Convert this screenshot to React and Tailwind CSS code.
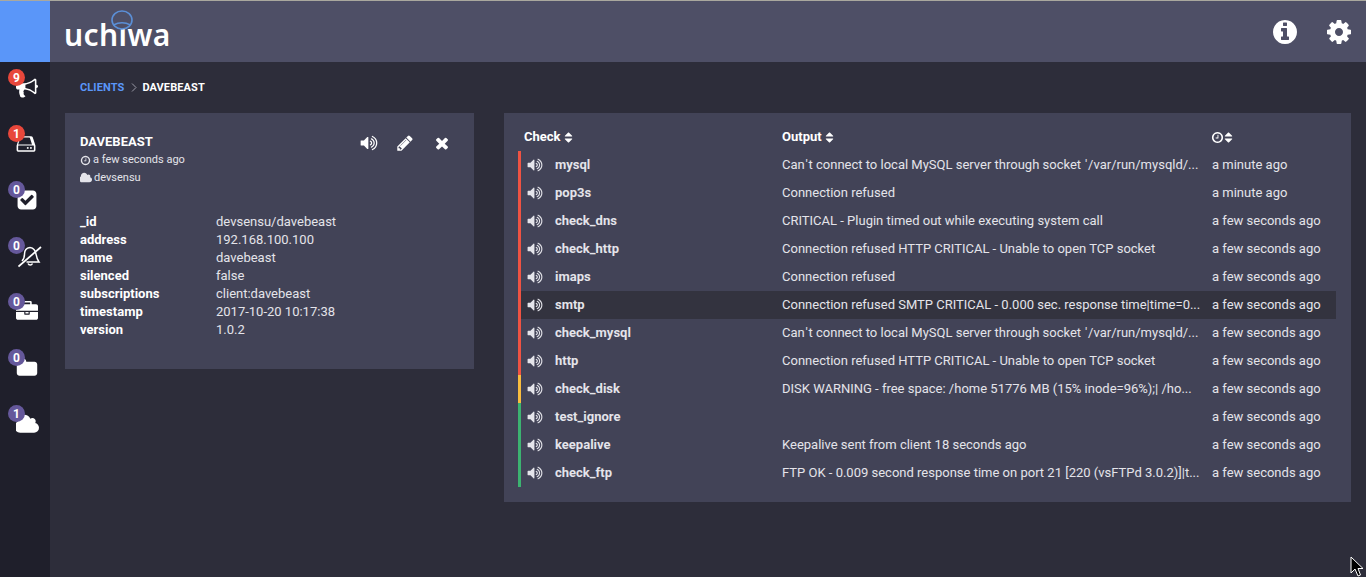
import React from "react";

const P = {
  volume: "M832 352v1088q0 26-19 45t-45 19-45-19l-333-333h-262q-26 0-45-19t-19-45v-384q0-26 19-45t45-19h262l333-333q19-19 45-19t45 19 19 45zm384 544q0 76-42.5 141.5t-112.5 93.5q-10 5-25 5-26 0-45-18.5t-19-45.5q0-21 12-35.5t29-25 34-23 29-36 12-56.5-12-56.5-29-36-34-23-29-25-12-35.5q0-27 19-45.5t45-18.5q15 0 25 5 70 27 112.5 93t42.5 142zm256 0q0 153-85 282.5t-225 188.5q-13 5-25 5-27 0-46-19t-19-45q0-39 39-59 56-29 76-44 74-54 115.5-135.5t41.5-173.5-41.5-173.5-115.5-135.5q-20-15-76-44-39-20-39-59 0-26 19-45t45-19q13 0 26 5 140 59 225 188.5t85 282.5zm256 0q0 230-127 422.5t-338 283.5q-13 5-26 5-26 0-45-19t-19-45q0-36 39-59 7-4 22.5-10.5t22.5-10.5q46-25 82-51 123-91 192-227t69-289-69-289-192-227q-36-26-82-51-7-4-22.5-10.5t-22.5-10.5q-39-23-39-59 0-26 19-45t45-19q13 0 26 5 211 91 338 283.5t127 422.5z",
  pencil: "M491 1536l91-91-235-235-91 91v107h128v128h107zm523-928q0-22-22-22-10 0-17 7l-542 542q-7 7-7 17 0 22 22 22 10 0 17-7l542-542q7-7 7-17zm-54-192l416 416-832 832h-416v-416zm683 96q0 53-37 90l-166 166-416-416 166-165q36-38 90-38 53 0 91 38l235 234q37 39 37 91z",
  times: "M1490 1322q0 40-28 68l-136 136q-28 28-68 28t-68-28l-294-294-294 294q-28 28-68 28t-68-28l-136-136q-28-28-28-68t28-68l294-294-294-294q-28-28-28-68t28-68l136-136q28-28 68-28t68 28l294 294 294-294q28-28 68-28t68 28l136 136q28 28 28 68t-28 68l-294 294 294 294q28 28 28 68z",
  info: "M1152 1376v-160q0-14-9-23t-23-9h-96v-512q0-14-9-23t-23-9h-320q-14 0-23 9t-9 23v160q0 14 9 23t23 9h96v320h-96q-14 0-23 9t-9 23v160q0 14 9 23t23 9h448q14 0 23-9t9-23zm-128-896v-160q0-14-9-23t-23-9h-192q-14 0-23 9t-9 23v160q0 14 9 23t23 9h192q14 0 23-9t9-23zm640 416q0 209-103 385.5t-279.5 279.5-385.5 103-385.5-103-279.5-279.5-103-385.5 103-385.5 279.5-279.5 385.5-103 385.5 103 279.5 279.5 103 385.5z",
  cog: "M1152 896q0-106-75-181t-181-75-181 75-75 181 75 181 181 75 181-75 75-181zm512-109v222q0 12-8 23t-20 13l-185 28q-19 54-39 91 35 50 107 138 10 12 10 25t-9 23q-27 37-99 108t-94 71q-12 0-26-9l-138-108q-44 23-91 38-16 136-29 186-7 28-36 28h-222q-14 0-24.5-8.5t-11.5-21.5l-28-184q-49-16-90-37l-141 107q-10 9-25 9-14 0-25-11-126-114-165-168-7-10-7-23 0-12 8-23 15-21 51-66.5t54-70.5q-27-50-41-99l-183-27q-13-2-21-12.5t-8-23.5v-222q0-12 8-23t19-13l186-28q14-46 39-92-40-57-107-138-10-12-10-24 0-10 9-23 26-36 98.5-107.5t94.5-71.5q13 0 26 10l138 107q44-23 91-38 16-136 29-186 7-28 36-28h222q14 0 24.5 8.5t11.5 21.5l28 184q49 16 90 37l142-107q9-9 24-9 13 0 25 10 129 119 165 170 7 8 7 22 0 12-8 23-15 21-51 66.5t-54 70.5q26 50 41 98l183 28q13 2 21 12.5t8 23.5z",
  bullhorn: "M1664 640q53 0 90.5 37.5t37.5 90.5-37.5 90.5-90.5 37.5v384q0 52-38 90t-90 38q-417-347-812-380-58 19-91 66t-31 100.5 40 92.5q-20 33-23 65.5t6 58 33.5 55 48 50 61.5 50.5q-29 58-111.5 83t-168.5 11.5-132-55.5q-7-23-29.5-87.5t-32-94.5-23-89-15-101 3.5-98.5 22-110.5h-122q-66 0-113-47t-47-113v-192q0-66 47-113t113-47h480q435 0 896-384 52 0 90 38t38 90v384zm-128 604v-954q-394 302-768 343v270q377 42 768 341z",
  check: "M813 1299l614-614q19-19 19-45t-19-45l-102-102q-19-19-45-19t-45 19l-467 467-211-211q-19-19-45-19t-45 19l-102 102q-19 19-19 45t19 45l358 358q19 19 45 19t45-19zm851-883v960q0 119-84.5 203.5t-203.5 84.5h-960q-119 0-203.5-84.5t-84.5-203.5v-960q0-119 84.5-203.5t203.5-84.5h960q119 0 203.5 84.5t84.5 203.5z",
  briefcase: "M640 256h512v-128h-512v128zm1152 640v480q0 66-47 113t-113 47h-1472q-66 0-113-47t-47-113v-480h672v160q0 26 19 45t45 19h320q26 0 45-19t19-45v-160h672zm-768 0v128h-256v-128h256zm768-480v384h-1792v-384q0-66 47-113t113-47h352v-160q0-40 28-68t68-28h576q40 0 68 28t28 68v160h352q66 0 113 47t47 113z",
  folder: "M1728 608v704q0 92-66 158t-158 66h-1216q-92 0-158-66t-66-158v-960q0-92 66-158t158-66h320q92 0 158 66t66 158v32h672q92 0 158 66t66 158z",
  cloud: "M1792 1152q0 159-112.5 271.5t-271.5 112.5h-1088q-185 0-316.5-131.5t-131.5-316.5q0-132 71-241.5t187-163.5q-2-28-2-43 0-212 150-362t362-150q158 0 286.5 88t187.5 230q70-62 166-62 106 0 181 75t75 181q0 75-41 138 129 30 213 134.5t84 239.5z",
  hdd: "M1040 1216q0 33-23.5 56.5t-56.5 23.5-56.5-23.5-23.5-56.5 23.5-56.5 56.5-23.5 56.5 23.5 23.5 56.5zm256 0q0 33-23.5 56.5t-56.5 23.5-56.5-23.5-23.5-56.5 23.5-56.5 56.5-23.5 56.5 23.5 23.5 56.5zm160 160v-320q0-13-9.5-22.5t-22.5-9.5h-1216q-13 0-22.5 9.5t-9.5 22.5v320q0 13 9.5 22.5t22.5 9.5h1216q13 0 22.5-9.5t9.5-22.5zm-1280-448h1128l-170-523q-4-13-15-21t-24-8h-710q-13 0-24 8t-15 21zm1408 128v320q0 66-47 113t-113 47h-1216q-66 0-113-47t-47-113v-320q0-25 16-75l197-606q17-53 63-86t101-33h782q55 0 101 33t63 86l197 606q16 50 16 75z",
  clock: "M1024 544v448q0 14-9 23t-23 9h-320q-14 0-23-9t-9-23v-64q0-14 9-23t23-9h224v-352q0-14 9-23t23-9h64q14 0 23 9t9 23zm416 352q0-148-73-273t-198-198-273-73-273 73-198 198-73 273 73 273 198 198 273 73 273-73 198-198 73-273zm224 0q0 209-103 385.5t-279.5 279.5-385.5 103-385.5-103-279.5-279.5-103-385.5 103-385.5 279.5-279.5 385.5-103 385.5 103 279.5 279.5 103 385.5z",
  sort: "M1408 1088q0 26-19 45l-448 448q-19 19-45 19t-45-19l-448-448q-19-19-19-45t19-45 45-19h896q26 0 45 19t19 45zm0-384q0 26-19 45t-45 19h-896q-26 0-45-19t-19-45 19-45l448-448q19-19 45-19t45 19l448 448q19 19 19 45z",
};

function Fa({ name, size, className = "" }) {
  return (
    <svg width={size} height={size} viewBox="0 0 1792 1792" fill="currentColor" className={`shrink-0 ${className}`}>
      <path d={P[name]} />
    </svg>
  );
}

function BellSlash() {
  return (
    <svg width="24" height="24" viewBox="0 0 24 24" fill="none" stroke="#fff" strokeWidth="1.5" className="ml-[2px]">
      <path d="M0.5 21.5 L23 2" strokeWidth="1.7" />
      <path d="M12 2.5 C8.5 3 6.5 5.5 6.5 9 C6.5 12.5 5.5 14.5 4 16" />
      <path d="M12 2.5 C15.5 3 17.5 6 18 9 C18.5 12 19.5 15 21 17 L8.5 17" />
      <path d="M10 18.5 a2.5 2.5 0 0 0 4.5 0" />
    </svg>
  );
}

const nav = [
  { n: 9, red: true, name: "bullhorn", size: 22 },
  { n: 1, red: true, name: "hdd", size: 22 },
  { n: 0, name: "check", size: 22 },
  { n: 0, bell: true },
  { n: 0, name: "briefcase", size: 22 },
  { n: 0, name: "folder", size: 22 },
  { n: 1, name: "cloud", size: 23 },
];

const meta = [
  ["_id", "devsensu/davebeast"],
  ["address", "192.168.100.100"],
  ["name", "davebeast"],
  ["silenced", "false"],
  ["subscriptions", "client:davebeast"],
  ["timestamp", "2017-10-20 10:17:38"],
  ["version", "1.0.2"],
];

const R = "bg-[#ef5343]", Y = "bg-[#f9bd3f]", G = "bg-[#3cb371]";
const rows = [
  ["mysql", "Can't connect to local MySQL server through socket '/var/run/mysqld/...", "a minute ago", R],
  ["pop3s", "Connection refused", "a minute ago", R],
  ["check_dns", "CRITICAL - Plugin timed out while executing system call", "a few seconds ago", R],
  ["check_http", "Connection refused HTTP CRITICAL - Unable to open TCP socket", "a few seconds ago", R],
  ["imaps", "Connection refused", "a few seconds ago", R],
  ["smtp", "Connection refused SMTP CRITICAL - 0.000 sec. response time|time=0...", "a few seconds ago", R, true],
  ["check_mysql", "Can't connect to local MySQL server through socket '/var/run/mysqld/...", "a few seconds ago", R],
  ["http", "Connection refused HTTP CRITICAL - Unable to open TCP socket", "a few seconds ago", R],
  ["check_disk", "DISK WARNING - free space: /home 51776 MB (15% inode=96%);| /ho...", "a few seconds ago", Y],
  ["test_ignore", "", "a few seconds ago", G],
  ["keepalive", "Keepalive sent from client 18 seconds ago", "a few seconds ago", G],
  ["check_ftp", "FTP OK - 0.009 second response time on port 21 [220 (vsFTPd 3.0.2)]|t...", "a few seconds ago", G],
];

function Output({ text }) {
  const parts = text.split("'");
  return parts.map((p, i) => (
    <React.Fragment key={i}>
      {i > 0 && <span className="mx-[0.75px]">'</span>}
      {p}
    </React.Fragment>
  ));
}

export default function App() {
  return (
    <div className="w-[1366px] h-[577px] overflow-hidden relative flex flex-col bg-[#2d2d3a] text-[#e4e4ea] text-[13px] font-['Roboto',sans-serif]">
      <div className="h-px bg-[#a9a89e] shrink-0" />
      <div className="flex flex-1 min-h-0">
        <aside className="w-[50px] shrink-0 bg-[#1f1f2b] flex flex-col">
          <div className="h-[61px] bg-[#5a96f9]" />
          <div className="flex flex-col pt-[5px] text-white">
            {nav.map(({ n, red, name, size, bell }, i) => (
              <div key={i} className="relative h-[56px] pl-[16px]">
                <div className={`absolute left-[8px] top-[2px] z-10 w-[17px] h-[17px] rounded-full flex items-center justify-center text-[12px] font-bold text-white ${red ? "bg-[#e8473b]" : "bg-[#65589b]"}`}>{n}</div>
                <div className="pt-[10px]">
                  {bell ? <BellSlash /> : <Fa name={name} size={size} />}
                </div>
              </div>
            ))}
          </div>
        </aside>
        <div className="flex-1 min-w-0 flex flex-col">
          <header className="h-[61px] shrink-0 bg-[#4e4f66] flex items-center justify-between pl-[15px] pr-[13px] text-white">
            <div className="relative w-[110px] h-[50px]">
              <span className="absolute -left-[1px] top-[8px] text-[30px] leading-[40px] font-['Noto_Sans',sans-serif] font-semibold tracking-[0.4px] text-white">uchiwa</span>
              <svg className="absolute left-[46px] top-[3px]" width="22" height="20" viewBox="0 0 22 20" fill="#4e4f66" stroke="#5b8fd6" strokeWidth="1.6">
                <ellipse cx="11" cy="10" rx="10" ry="9" />
                <path d="M2.5 15 Q11 10.5 19.5 15" fill="none" />
              </svg>
            </div>
            <div className="flex items-center gap-[26px]">
              <Fa name="info" size={28} />
              <Fa name="cog" size={28} />
            </div>
          </header>
          <main className="flex-1 min-h-0 px-[15px]">
            <nav className="h-[51px] pl-[15px] pt-[19px] flex items-start text-[11px] font-bold leading-[13px]">
              <span className="text-[#5a96f9] tracking-[0.1px]">CLIENTS</span>
              <svg width="6" height="9" viewBox="0 0 6 9" fill="none" stroke="#9a9aa6" strokeWidth="1" className="ml-[7px] mr-[5px] mt-[2px]">
                <path d="M1 0.5 L5 4.5 L1 8.5" />
              </svg>
              <span className="text-white tracking-[0.1px]">DAVEBEAST</span>
            </nav>
            <div className="flex items-start gap-[30px]">
              <section className="w-[409px] h-[256px] bg-[#424357] px-[15px] pt-[20px]">
                <div className="flex justify-between">
                  <div>
                    <div className="text-[13px] font-bold text-white leading-[17px]">DAVEBEAST</div>
                    <div className="flex items-center gap-[2px] text-[11px] leading-[18px] mt-[1px]"><Fa name="clock" size={11} />a few seconds ago</div>
                    <div className="flex items-center gap-[2px] text-[11px] leading-[18px]"><Fa name="cloud" size={12} />devsensu</div>
                  </div>
                  <div className="flex items-start pt-[1px] pr-[8px] text-white">
                    <Fa name="volume" size={18} />
                    <Fa name="pencil" size={18} className="ml-[18px]" />
                    <Fa name="times" size={18} className="ml-[19px]" />
                  </div>
                </div>
                <div className="mt-[26px] grid grid-cols-[136px_1fr] leading-[18px]">
                  {meta.map(([k, v]) => (
                    <React.Fragment key={k}>
                      <div className="font-bold text-white">{k}</div>
                      <div>{v}</div>
                    </React.Fragment>
                  ))}
                </div>
              </section>
              <section className="w-[847px] h-[389px] bg-[#424357] pl-[14px] pr-[15px] pt-[13px]">
                <div className="h-[22px] mb-[3px] flex items-center font-bold text-white pl-[6px]">
                  <div className="w-[258px] flex items-center">Check<Fa name="sort" size={13} className="ml-[1px]" /></div>
                  <div className="w-[430px] flex items-center">Output<Fa name="sort" size={13} className="ml-[1px]" /></div>
                  <div className="flex items-center"><Fa name="clock" size={13} className="-ml-[1px]" /><Fa name="sort" size={13} className="-ml-[2px]" /></div>
                </div>
                {rows.map(([name, out, time, bar, hl]) => (
                  <div key={name} className={`h-[28px] flex items-center ${hl ? "bg-[#33333f]" : ""}`}>
                    <div className={`w-[3px] h-full ${bar}`} />
                    <div className="w-[34px] pl-[6px] flex items-center"><Fa name="volume" size={16} /></div>
                    <div className="w-[227px] font-bold">{name}</div>
                    <div className="w-[430px] whitespace-nowrap overflow-hidden"><Output text={out} /></div>
                    <div>{time}</div>
                  </div>
                ))}
              </section>
            </div>
          </main>
        </div>
      </div>
      <svg className="absolute left-[1350px] top-[556px]" width="14" height="21" viewBox="0 0 14 21">
        <path d="M1 1 V17 L5 13 L8 20 L10.5 19 L8 12.5 L13 12.5 Z" fill="#000" stroke="#fff" strokeWidth="1" />
      </svg>
    </div>
  );
}
